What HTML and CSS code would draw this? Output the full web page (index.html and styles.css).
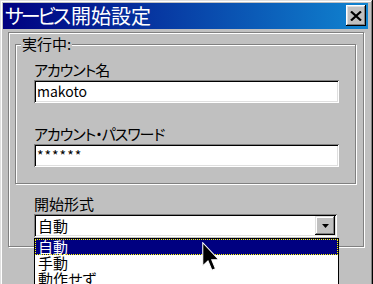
FILE: index.html
```html
<!DOCTYPE html>
<html lang="ja">
<head>
    <meta charset="UTF-8">
    <meta name="viewport" content="width=device-width, initial-scale=1.0">
    <title>サービス開始設定</title>
    <link rel="stylesheet" href="styles.css">
</head>
<body>
    <div class="window">
        <div class="titlebar">
            <span class="title"><span class="kana">サービス</span>開始設定</span>
            <button class="close" aria-label="閉じる">
                <svg width="12" height="10" viewBox="0 0 12 10">
                    <path d="M1 0.5 L11 9.5 M11 0.5 L1 9.5" stroke="#000" stroke-width="2.2" fill="none"/>
                </svg>
            </button>
        </div>

        <div class="panel">
            <fieldset class="group">
                <legend>実行中:</legend>
                <div class="fields">
                    <label class="label"><span class="kana">アカウント</span>名</label>
                    <div class="textbox">makoto</div>
                    <label class="label second"><span class="kana">アカウント・パスワード</span></label>
                    <div class="textbox password">******</div>
                </div>
            </fieldset>

            <label class="label third">開始形式</label>
            <div class="combo">
                <span class="combo-value">自動</span>
                <span class="combo-btn">
                    <svg width="7" height="4" viewBox="0 0 7 4">
                        <path d="M0 0 H7 L3.5 4 Z" fill="#000"/>
                    </svg>
                </span>
                <ul class="dropdown">
                    <li class="selected">自動</li>
                    <li>手動</li>
                    <li>動作せず</li>
                </ul>
            </div>
        </div>

        <!-- mouse pointer over the open list -->
        <svg class="cursor" width="18" height="30" viewBox="0 0 12 20">
            <path d="M0.5 0.5 V16 L4 12.6 L6.6 18.8 L9 17.8 L6.5 11.8 H11.2 Z" fill="#000" stroke="#fff" stroke-width="0.7"/>
        </svg>
    </div>
</body>
</html>
```

FILE: styles.css
```css
* {
    box-sizing: border-box;
}

html, body {
    margin: 0;
}

body {
    width: 373px;
    height: 284px;
    overflow: hidden;
    background: #c0c0c0;
    color: #000;
    font-family: "Noto Sans CJK JP", sans-serif;
    font-size: 15px;
    font-feature-settings: "palt";
}

.window {
    position: relative;
    width: 373px;
    height: 300px;
    padding: 3px 5px 0 3px;
    background: #c0c0c0;
    box-shadow: inset -1px 0 #000, inset 1px 1px #dfdfdf,
                inset -2px 0 #808080, inset 2px 2px #fff;
}

.titlebar {
    display: flex;
    align-items: flex-start;
    height: 26px;
    background: linear-gradient(to right, #000080, #1084d0);
    color: #fff;
}

.title {
    flex: 1;
    padding-left: 2px;
    font-size: 20px;
    line-height: 26px;
    white-space: nowrap;
}

.title .kana {
    letter-spacing: -3px;
    margin-right: 3px;
}

.close {
    display: flex;
    align-items: center;
    justify-content: center;
    width: 20px;
    height: 21px;
    margin: 2px 2px 0 0;
    padding: 0;
    border: none;
    background: #c0c0c0;
    box-shadow: inset -1px -1px #000, inset 1px 1px #fff,
                inset -2px -2px #808080, inset 2px 2px #dfdfdf;
}

/* etched frames */
.panel {
    width: 356px;
    margin: 3px 0 0 5px;
    padding: 3px 0 9px 25px;
    border: 1px solid #808080;
    box-shadow: inset 1px 1px #fff, 1px 1px #fff;
}

.group {
    width: 341px;
    margin: 0 0 0 -19px;
    padding: 9px 0 16px 5px;
    border: 1px solid #808080;
    box-shadow: inset 1px 1px #fff, 1px 1px #fff;
}

.group legend {
    padding: 0 1px;
    line-height: 16px;
    background: #c0c0c0;
}

.fields {
    padding-left: 13px;
}

.label {
    display: block;
    line-height: 17px;
    margin-bottom: 2px;
    white-space: nowrap;
}

.label .kana {
    letter-spacing: -1px;
}

.label.second {
    margin-top: 22px;
}

.label.third {
    margin-top: 11px;
}

.textbox {
    width: 305px;
    height: 23px;
    padding: 0 3px;
    background: #fff;
    font-size: 14px;
    line-height: 23px;
    box-shadow: inset 1px 1px #808080, inset -1px -1px #fff,
                inset 2px 2px #000, inset -2px -2px #dfdfdf;
}

.textbox.password {
    letter-spacing: 1px;
}

.combo {
    position: relative;
    display: flex;
    width: 303px;
    height: 23px;
    padding: 2px;
    background: #fff;
    box-shadow: inset 1px 1px #808080, inset -1px -1px #fff,
                inset 2px 2px #000, inset -2px -2px #dfdfdf;
}

.combo-value {
    flex: 1;
    padding-left: 2px;
    line-height: 19px;
}

.combo-btn {
    display: flex;
    align-items: center;
    justify-content: center;
    width: 20px;
    height: 19px;
    background: #c0c0c0;
    box-shadow: inset -1px -1px #000, inset 1px 1px #dfdfdf,
                inset -2px -2px #808080, inset 2px 2px #fff;
}

.dropdown {
    position: absolute;
    left: 0;
    top: 100%;
    width: 305px;
    margin: 1px 0 0;
    padding: 0;
    list-style: none;
    background: #fff;
    border: 1px solid #000;
}

.dropdown li {
    height: 16px;
    padding-left: 3px;
    line-height: 16px;
}

.dropdown li.selected {
    background: #000080;
    color: #fff;
    outline: 1px dotted #ffff00;
    outline-offset: -1px;
}

.cursor {
    position: absolute;
    left: 202px;
    top: 242px;
}
```
